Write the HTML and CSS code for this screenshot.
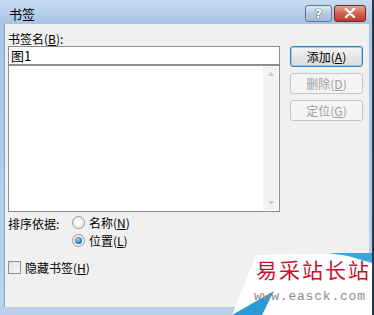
FILE: index.html
```html
<!DOCTYPE html>
<html>
<head>
    <title>书签</title>
    <link rel="stylesheet" href="styles.css">
</head>
<body>
    <div class="window">
        <div class="titlebar">
            <span class="title">书签</span>
            <div class="caption-buttons">
                <span class="cap-btn help">?</span>
                <span class="cap-btn close">
                    <svg width="12" height="10" viewBox="0 0 12 10">
                        <path d="M2 1 L10 9 M10 1 L2 9" stroke="#fff" stroke-width="2.4" stroke-linecap="round"/>
                    </svg>
                </span>
            </div>
        </div>
        <div class="client">
            <div class="top-row">
                <div class="left-col">
                    <div class="label">书签名(<u>B</u>):</div>
                    <div class="name-input">图1</div>
                    <div class="list-box">
                        <div class="scrollbar">
                            <span class="arrow up"></span>
                            <span class="arrow down"></span>
                        </div>
                    </div>
                </div>
                <div class="right-col">
                    <button class="btn default">添加(<u>A</u>)</button>
                    <button class="btn" disabled>删除(<u>D</u>)</button>
                    <button class="btn" disabled>定位(<u>G</u>)</button>
                </div>
            </div>
            <div class="sort-row">
                <span class="sort-label">排序依据:</span>
                <div class="radios">
                    <label class="radio-item"><span class="radio"></span><span>名称(<u>N</u>)</span></label>
                    <label class="radio-item"><span class="radio checked"></span><span>位置(<u>L</u>)</span></label>
                </div>
            </div>
            <label class="check-row"><span class="checkbox"></span><span>隐藏书签(<u>H</u>)</span></label>
        </div>

        <div class="watermark">
            <svg class="swoosh" width="140" height="62" viewBox="0 0 140 62">
                <polygon points="24,2 140,0 140,62 0,62" fill="#ffffff"/>
                <polygon points="0,62 42,38 30,62" fill="#2a9ad6"/>
                <polygon points="96,0 140,0 140,10 116,3" fill="#39a6dc"/>
            </svg>
            <div class="wm-cn">易采站长站</div>
            <div class="wm-url">www.easck.com</div>
        </div>
    </div>
</body>
</html>
```

FILE: styles.css
```css
body {
    margin: 0;
    padding: 0;
    width: 374px;
    height: 315px;
    overflow: hidden;
    font-family: "Noto Sans CJK SC", "DejaVu Sans", sans-serif;
    font-size: 12px;
    color: #000;
}

.window {
    position: relative;
    width: 374px;
    height: 315px;
    box-sizing: border-box;
    background: linear-gradient(#c2d8ef, #aac6e6 30px, #b9d1ec);
    border-right: 2px solid #28374a;
    display: flex;
    flex-direction: column;
}

.titlebar {
    height: 24px;
    display: flex;
    align-items: center;
    justify-content: space-between;
    padding: 2px 6px 0 9px;
    box-sizing: border-box;
    background: linear-gradient(#c8dcf1, #a7c3e4);
}

.title {
    font-size: 13px;
    color: #000;
}

.caption-buttons {
    display: flex;
    gap: 2px;
}

.cap-btn {
    height: 17px;
    border: 1px solid #5f7591;
    border-radius: 3px;
    display: flex;
    align-items: center;
    justify-content: center;
    box-sizing: border-box;
}

.help {
    width: 27px;
    background: linear-gradient(#dfeaf6, #b6cbe3 50%, #a3bbd8);
    color: #fff;
    font-weight: bold;
    font-size: 13px;
    font-family: "DejaVu Sans", sans-serif;
    text-shadow: 0 0 1px #2b3d55, 0 0 1px #2b3d55;
}

.close {
    width: 32px;
    border-color: #6b2a22;
    background: linear-gradient(#e7a497, #d3614f 50%, #c0392b);
}

.client {
    flex: 1;
    background: #f0f0f0;
    margin: 0 3px 8px 4px;
    border-left: 1px solid #8fa4bd;
    padding: 7px 0 0 3px;
}

.top-row {
    display: flex;
    gap: 10px;
}

.left-col {
    width: 272px;
}

.label {
    height: 15px;
    line-height: 15px;
}

u {
    text-decoration: underline;
}

.name-input {
    height: 18px;
    box-sizing: border-box;
    border: 1px solid #8d8d8d;
    border-bottom: none;
    background: #fff;
    padding-left: 2px;
    line-height: 17px;
    font-size: 13px;
}

.list-box {
    height: 148px;
    box-sizing: border-box;
    border: 1px solid #8d8d8d;
    border-top: 2px solid #8d8d8d;
    background: #fff;
    display: flex;
    justify-content: flex-end;
    padding: 1px;
}

.scrollbar {
    width: 15px;
    background: #f2f2f2;
    display: flex;
    flex-direction: column;
    justify-content: space-between;
    align-items: center;
    padding: 5px 0;
}

.arrow {
    width: 0;
    height: 0;
    border-left: 3px solid transparent;
    border-right: 3px solid transparent;
}

.arrow.up {
    border-bottom: 4px solid #c8c8c8;
}

.arrow.down {
    border-top: 4px solid #c8c8c8;
}

.right-col {
    padding-top: 15px;
    display: flex;
    flex-direction: column;
    gap: 6px;
}

.btn {
    width: 73px;
    height: 21px;
    border: 1px solid #adadad;
    border-radius: 3px;
    background: linear-gradient(#f6f6f6, #e6e6e6 50%, #dcdcdc);
    font-family: "Noto Sans CJK SC", sans-serif;
    font-size: 12px;
    padding: 0;
    color: #000;
    line-height: 18px;
}

.btn.default {
    border-color: #3c7fb1;
    box-shadow: inset 0 0 0 1px #8fd1f2;
}

.btn:disabled {
    color: #a0a0a0;
    background: #f4f4f4;
    border-color: #c6c6c6;
}

.sort-row {
    display: flex;
    margin-top: 3px;
}

.sort-label {
    width: 64px;
}

.radios {
    display: flex;
    flex-direction: column;
    gap: 4px;
}

.radio-item, .check-row {
    display: flex;
    align-items: center;
    gap: 4px;
    height: 14px;
}

.radio {
    width: 11px;
    height: 11px;
    border: 1px solid #9a9a9a;
    border-radius: 50%;
    background: radial-gradient(#ffffff, #e0e0e0);
    position: relative;
}

.radio.checked::after {
    content: "";
    position: absolute;
    left: 2px;
    top: 2px;
    width: 7px;
    height: 7px;
    border-radius: 50%;
    background: radial-gradient(circle at 40% 35%, #9fd5f5, #1e6bb0 70%, #15477a);
}

.check-row {
    margin-top: 13px;
}

.checkbox {
    width: 11px;
    height: 11px;
    border: 1px solid #8e8f8f;
    background: linear-gradient(135deg, #e0e0e0, #f8f8f8);
}

.watermark {
    position: absolute;
    right: 0;
    bottom: 0;
    width: 140px;
    height: 62px;
}

.swoosh {
    position: absolute;
    left: 0;
    top: 0;
}

.wm-cn {
    position: relative;
    margin: 5px 0 0 24px;
    font-family: "Liberation Serif", "Noto Sans CJK SC", serif;
    font-size: 21px;
    letter-spacing: 2px;
    color: #c8102e;
    line-height: 26px;
}

.wm-url {
    position: relative;
    margin: 5px 0 0 22px;
    font-family: "Liberation Mono", monospace;
    font-size: 13px;
    color: #8a8a8a;
    letter-spacing: 0.8px;
}
```
